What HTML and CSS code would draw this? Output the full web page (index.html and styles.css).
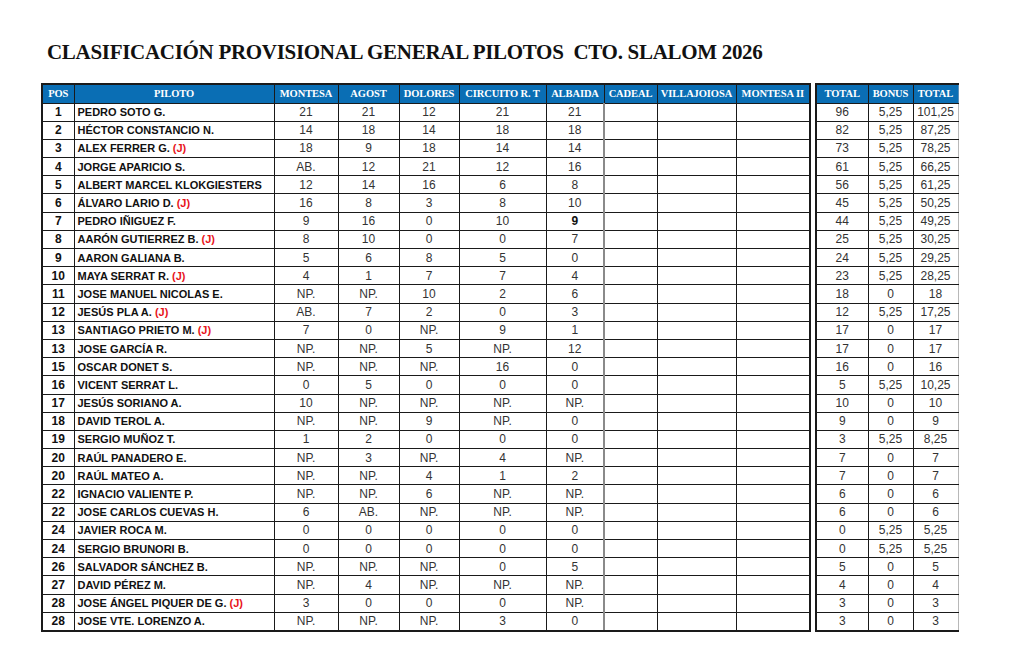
FILE: index.html
```html
<!DOCTYPE html>
<html lang="es">
<head>
<meta charset="utf-8">
<title>Clasificación provisional</title>
<link rel="stylesheet" href="styles.css">
</head>
<body>
<div class="page">
<h1 class="title">CLASIFICACIÓN PROVISIONAL GENERAL PILOTOS&nbsp; CTO. SLALOM 2026</h1>
<table class="grid">
<colgroup>
<col class="c-pos"><col class="c-name"><col class="c-mon"><col class="c-ago"><col class="c-dol"><col class="c-cir"><col class="c-alb"><col class="c-cad"><col class="c-vil"><col class="c-mo2"><col class="c-gap"><col class="c-tot"><col class="c-bon"><col class="c-tot2">
</colgroup>
<thead>
<tr><th class="first">POS</th><th>PILOTO</th><th>MONTESA</th><th>AGOST</th><th>DOLORES</th><th>CIRCUITO R. T</th><th class="alb">ALBAIDA</th><th>CADEAL</th><th>VILLAJOIOSA</th><th class="last">MONTESA II</th><th class="gap"></th><th class="rfirst">TOTAL</th><th>BONUS</th><th class="rlast">TOTAL</th></tr>
</thead>
<tbody>
<tr><td class="pos">1</td><td class="name">PEDRO SOTO G.</td><td>21</td><td>21</td><td>12</td><td>21</td><td class="alb">21</td><td></td><td></td><td class="last"></td><td class="gap"></td><td class="rfirst">96</td><td>5,25</td><td class="rlast">101,25</td></tr>
<tr><td class="pos">2</td><td class="name">HÉCTOR CONSTANCIO N.</td><td>14</td><td>18</td><td>14</td><td>18</td><td class="alb">18</td><td></td><td></td><td class="last"></td><td class="gap"></td><td class="rfirst">82</td><td>5,25</td><td class="rlast">87,25</td></tr>
<tr><td class="pos">3</td><td class="name">ALEX FERRER G. <span class="jr">(J)</span></td><td>18</td><td>9</td><td>18</td><td>14</td><td class="alb">14</td><td></td><td></td><td class="last"></td><td class="gap"></td><td class="rfirst">73</td><td>5,25</td><td class="rlast">78,25</td></tr>
<tr><td class="pos">4</td><td class="name">JORGE APARICIO S.</td><td>AB.</td><td>12</td><td>21</td><td>12</td><td class="alb">16</td><td></td><td></td><td class="last"></td><td class="gap"></td><td class="rfirst">61</td><td>5,25</td><td class="rlast">66,25</td></tr>
<tr><td class="pos">5</td><td class="name">ALBERT MARCEL KLOKGIESTERS</td><td>12</td><td>14</td><td>16</td><td>6</td><td class="alb">8</td><td></td><td></td><td class="last"></td><td class="gap"></td><td class="rfirst">56</td><td>5,25</td><td class="rlast">61,25</td></tr>
<tr><td class="pos">6</td><td class="name">ÁLVARO LARIO D. <span class="jr">(J)</span></td><td>16</td><td>8</td><td>3</td><td>8</td><td class="alb">10</td><td></td><td></td><td class="last"></td><td class="gap"></td><td class="rfirst">45</td><td>5,25</td><td class="rlast">50,25</td></tr>
<tr><td class="pos">7</td><td class="name">PEDRO IÑIGUEZ F.</td><td>9</td><td>16</td><td>0</td><td>10</td><td class="alb strong">9</td><td></td><td></td><td class="last"></td><td class="gap"></td><td class="rfirst">44</td><td>5,25</td><td class="rlast">49,25</td></tr>
<tr><td class="pos">8</td><td class="name">AARÓN GUTIERREZ B. <span class="jr">(J)</span></td><td>8</td><td>10</td><td>0</td><td>0</td><td class="alb">7</td><td></td><td></td><td class="last"></td><td class="gap"></td><td class="rfirst">25</td><td>5,25</td><td class="rlast">30,25</td></tr>
<tr><td class="pos">9</td><td class="name">AARON GALIANA B.</td><td>5</td><td>6</td><td>8</td><td>5</td><td class="alb">0</td><td></td><td></td><td class="last"></td><td class="gap"></td><td class="rfirst">24</td><td>5,25</td><td class="rlast">29,25</td></tr>
<tr><td class="pos">10</td><td class="name">MAYA SERRAT R. <span class="jr">(J)</span></td><td>4</td><td>1</td><td>7</td><td>7</td><td class="alb">4</td><td></td><td></td><td class="last"></td><td class="gap"></td><td class="rfirst">23</td><td>5,25</td><td class="rlast">28,25</td></tr>
<tr><td class="pos">11</td><td class="name">JOSE MANUEL NICOLAS E.</td><td>NP.</td><td>NP.</td><td>10</td><td>2</td><td class="alb">6</td><td></td><td></td><td class="last"></td><td class="gap"></td><td class="rfirst">18</td><td>0</td><td class="rlast">18</td></tr>
<tr><td class="pos">12</td><td class="name">JESÚS PLA A. <span class="jr">(J)</span></td><td>AB.</td><td>7</td><td>2</td><td>0</td><td class="alb">3</td><td></td><td></td><td class="last"></td><td class="gap"></td><td class="rfirst">12</td><td>5,25</td><td class="rlast">17,25</td></tr>
<tr><td class="pos">13</td><td class="name">SANTIAGO PRIETO M. <span class="jr">(J)</span></td><td>7</td><td>0</td><td>NP.</td><td>9</td><td class="alb">1</td><td></td><td></td><td class="last"></td><td class="gap"></td><td class="rfirst">17</td><td>0</td><td class="rlast">17</td></tr>
<tr><td class="pos">13</td><td class="name">JOSE GARCÍA R.</td><td>NP.</td><td>NP.</td><td>5</td><td>NP.</td><td class="alb">12</td><td></td><td></td><td class="last"></td><td class="gap"></td><td class="rfirst">17</td><td>0</td><td class="rlast">17</td></tr>
<tr><td class="pos">15</td><td class="name">OSCAR DONET S.</td><td>NP.</td><td>NP.</td><td>NP.</td><td>16</td><td class="alb">0</td><td></td><td></td><td class="last"></td><td class="gap"></td><td class="rfirst">16</td><td>0</td><td class="rlast">16</td></tr>
<tr><td class="pos">16</td><td class="name">VICENT SERRAT L.</td><td>0</td><td>5</td><td>0</td><td>0</td><td class="alb">0</td><td></td><td></td><td class="last"></td><td class="gap"></td><td class="rfirst">5</td><td>5,25</td><td class="rlast">10,25</td></tr>
<tr><td class="pos">17</td><td class="name">JESÚS SORIANO A.</td><td>10</td><td>NP.</td><td>NP.</td><td>NP.</td><td class="alb">NP.</td><td></td><td></td><td class="last"></td><td class="gap"></td><td class="rfirst">10</td><td>0</td><td class="rlast">10</td></tr>
<tr><td class="pos">18</td><td class="name">DAVID TEROL A.</td><td>NP.</td><td>NP.</td><td>9</td><td>NP.</td><td class="alb">0</td><td></td><td></td><td class="last"></td><td class="gap"></td><td class="rfirst">9</td><td>0</td><td class="rlast">9</td></tr>
<tr><td class="pos">19</td><td class="name">SERGIO MUÑOZ T.</td><td>1</td><td>2</td><td>0</td><td>0</td><td class="alb">0</td><td></td><td></td><td class="last"></td><td class="gap"></td><td class="rfirst">3</td><td>5,25</td><td class="rlast">8,25</td></tr>
<tr><td class="pos">20</td><td class="name">RAÚL PANADERO E.</td><td>NP.</td><td>3</td><td>NP.</td><td>4</td><td class="alb">NP.</td><td></td><td></td><td class="last"></td><td class="gap"></td><td class="rfirst">7</td><td>0</td><td class="rlast">7</td></tr>
<tr><td class="pos">20</td><td class="name">RAÚL MATEO A.</td><td>NP.</td><td>NP.</td><td>4</td><td>1</td><td class="alb">2</td><td></td><td></td><td class="last"></td><td class="gap"></td><td class="rfirst">7</td><td>0</td><td class="rlast">7</td></tr>
<tr><td class="pos">22</td><td class="name">IGNACIO VALIENTE P.</td><td>NP.</td><td>NP.</td><td>6</td><td>NP.</td><td class="alb">NP.</td><td></td><td></td><td class="last"></td><td class="gap"></td><td class="rfirst">6</td><td>0</td><td class="rlast">6</td></tr>
<tr><td class="pos">22</td><td class="name">JOSE CARLOS CUEVAS H.</td><td>6</td><td>AB.</td><td>NP.</td><td>NP.</td><td class="alb">NP.</td><td></td><td></td><td class="last"></td><td class="gap"></td><td class="rfirst">6</td><td>0</td><td class="rlast">6</td></tr>
<tr><td class="pos">24</td><td class="name">JAVIER ROCA M.</td><td>0</td><td>0</td><td>0</td><td>0</td><td class="alb">0</td><td></td><td></td><td class="last"></td><td class="gap"></td><td class="rfirst">0</td><td>5,25</td><td class="rlast">5,25</td></tr>
<tr><td class="pos">24</td><td class="name">SERGIO BRUNORI B.</td><td>0</td><td>0</td><td>0</td><td>0</td><td class="alb">0</td><td></td><td></td><td class="last"></td><td class="gap"></td><td class="rfirst">0</td><td>5,25</td><td class="rlast">5,25</td></tr>
<tr><td class="pos">26</td><td class="name">SALVADOR SÁNCHEZ B.</td><td>NP.</td><td>NP.</td><td>NP.</td><td>0</td><td class="alb">5</td><td></td><td></td><td class="last"></td><td class="gap"></td><td class="rfirst">5</td><td>0</td><td class="rlast">5</td></tr>
<tr><td class="pos">27</td><td class="name">DAVID PÉREZ M.</td><td>NP.</td><td>4</td><td>NP.</td><td>NP.</td><td class="alb">NP.</td><td></td><td></td><td class="last"></td><td class="gap"></td><td class="rfirst">4</td><td>0</td><td class="rlast">4</td></tr>
<tr><td class="pos">28</td><td class="name">JOSE ÁNGEL PIQUER DE G. <span class="jr">(J)</span></td><td>3</td><td>0</td><td>0</td><td>0</td><td class="alb">NP.</td><td></td><td></td><td class="last"></td><td class="gap"></td><td class="rfirst">3</td><td>0</td><td class="rlast">3</td></tr>
<tr class="end"><td class="pos">28</td><td class="name">JOSE VTE. LORENZO A.</td><td>NP.</td><td>NP.</td><td>NP.</td><td>3</td><td class="alb">0</td><td></td><td></td><td class="last"></td><td class="gap"></td><td class="rfirst">3</td><td>0</td><td class="rlast">3</td></tr>
</tbody>
</table>
</div>
</body>
</html>
```
FILE: styles.css
```css
html, body {
  margin: 0;
  padding: 0;
  background: #ffffff;
}

.page {
  padding: 37px 0 0 41px;
}

.title {
  margin: 0 0 16px 6px;
  font-family: "Liberation Serif", "Times New Roman", serif;
  font-weight: bold;
  font-size: 21px;
  line-height: 30px;
  letter-spacing: -0.3px;
  color: #111111;
  white-space: nowrap;
}

.grid {
  border-collapse: collapse;
  table-layout: fixed;
  width: 917px;
  font-family: "Liberation Sans", Arial, sans-serif;
}

.c-pos { width: 32px; }
.c-name { width: 200px; }
.c-mon { width: 64px; }
.c-ago { width: 61px; }
.c-dol { width: 60px; }
.c-cir { width: 87px; }
.c-alb { width: 58px; }
.c-cad { width: 53px; }
.c-vil { width: 79px; }
.c-mo2 { width: 74px; }
.c-gap { width: 6px; }
.c-tot { width: 52px; }
.c-bon { width: 45px; }
.c-tot2 { width: 45px; }

.grid th {
  height: 17.5px;
  padding: 0;
  background: #0a6eb4;
  color: #ffffff;
  font-family: "Liberation Serif", "Times New Roman", serif;
  font-weight: bold;
  font-size: 10.5px;
  letter-spacing: -0.1px;
  text-align: center;
  white-space: nowrap;
  overflow: hidden;
  border: 1px solid #1a1a1a;
  border-top: 2px solid #1a1a1a;
}

.grid td {
  height: 17.2px;
  padding: 0;
  text-align: center;
  font-size: 12px;
  color: #333333;
  white-space: nowrap;
  overflow: hidden;
  border: 1px solid #1a1a1a;
  line-height: 14px;
}

.grid .first,
.grid .pos {
  border-left: 2px solid #1a1a1a;
}

.grid td.pos {
  font-weight: bold;
  font-size: 12px;
  color: #111111;
}

.grid td.name {
  text-align: left;
  padding-left: 3px;
  font-weight: bold;
  font-size: 11px;
  color: #111111;
}

.jr {
  color: #e8141b;
}

.grid td.strong {
  font-weight: bold;
  color: #111111;
}

.grid td.alb {
  border-right: 2px solid #8a8a8a;
}

.grid th.alb {
  border-right: 1px solid #1a1a1a;
}

.grid .last {
  border-right: 2px solid #1a1a1a;
}

.grid .gap,
.grid th.gap {
  background: #ffffff;
  border-top: none;
  border-bottom: none;
}

.grid .rfirst {
  border-left: 2px solid #1a1a1a;
}

.grid .rlast {
  border-right: 1px solid #b8b8b8;
}

.grid th.rlast {
  border-right: 1px solid #5c8fb8;
}

.grid tr.end td {
  border-bottom: 2px solid #1a1a1a;
}

.grid tr.end td.gap {
  border-bottom: none;
}
```
